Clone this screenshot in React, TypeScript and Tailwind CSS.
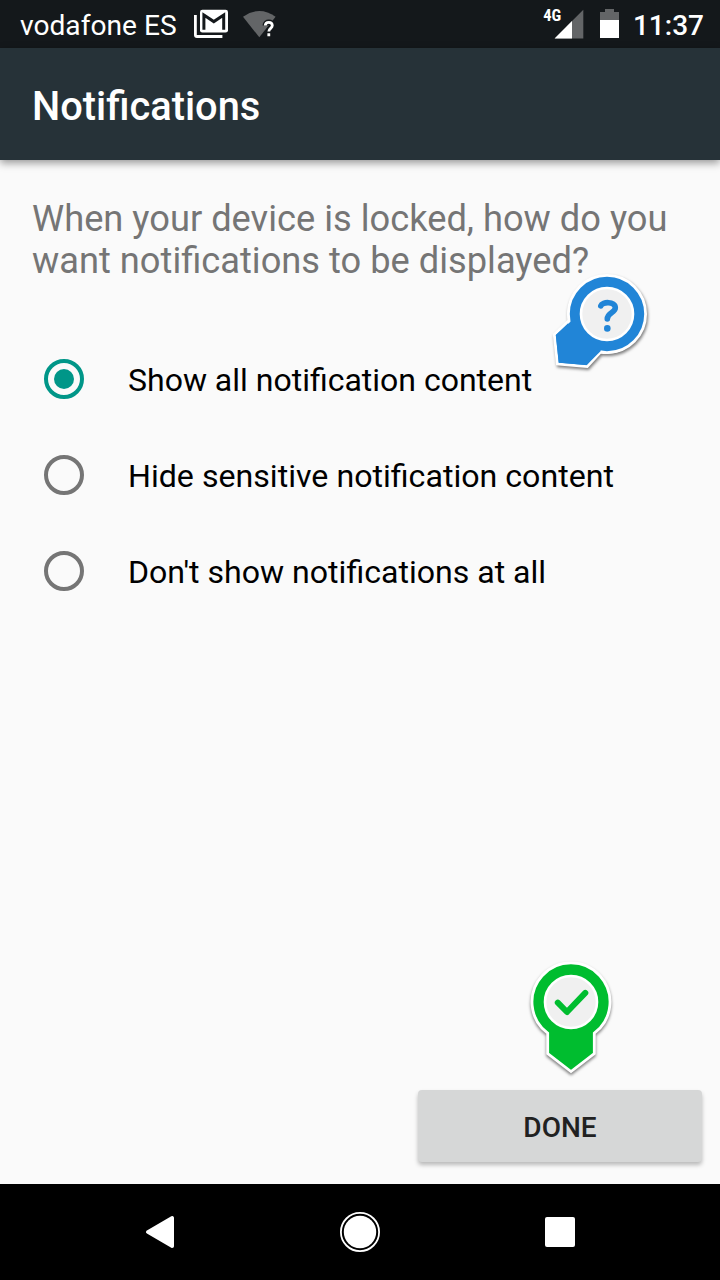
import { useState } from "react";

const OPTIONS = [
  { label: "Show all notification content", size: "text-[32px]" },
  { label: "Hide sensitive notification content", size: "text-[32.15px]" },
  { label: "Don't show notifications at all", size: "text-[32.08px]" },
];

function StatusBar() {
  return (
    <div className="flex h-12 shrink-0 items-center bg-[#14181b] pl-5 pr-4 text-[28px] leading-[33px] text-white">
      <span className="mt-[3px] w-[174px] shrink-0 whitespace-nowrap text-[28.15px]">vodafone ES</span>
      <svg className="h-12 w-[34px] shrink-0" viewBox="194 0 34 48" fill="none">
        <path d="M195.4 15v19.9q0 1.6 1.6 1.6h25.4" stroke="#fff" strokeWidth="2.8" />
        <rect x="200" y="9.8" width="28" height="22.8" rx="2.4" fill="#fff" />
        <path d="M203.9 29.8V15l9.9 6.6 9.9-6.6v14.8" stroke="#14181b" strokeWidth="3" />
      </svg>
      <svg className="ml-[15px] h-12 w-[34px] shrink-0" viewBox="243 0 34 48">
        <path d="M243 16.7Q259.3 5.3 275.6 16.7L259.3 37.3z" fill="#636567" />
        <path d="M265.3 25.6c0-4.4 7-4.4 7 0 0 2.8-3.5 2.9-3.5 6M268.8 33.4v2.8" fill="none" stroke="#14181b" strokeWidth="5.6" />
        <path d="M265.3 25.6c0-4.4 7-4.4 7 0 0 2.8-3.5 2.9-3.5 6M268.8 33.3v3" fill="none" stroke="#fff" strokeWidth="2.8" />
      </svg>
      <div className="flex-1" />
      <span className="mb-[15px] mr-[-7px] font-['Roboto_Condensed',Roboto,sans-serif] text-[16.5px] font-bold leading-none tracking-[-0.1px]">
        4G
      </span>
      <svg className="h-12 w-[30px] shrink-0" viewBox="554 0 30 48">
        <path d="M583.3 9.8v28.7H554.6z" fill="#636567" />
        <path d="M572 21.1v17.4H554.6z" fill="#fff" />
      </svg>
      <svg className="ml-4 h-12 w-[19px] shrink-0" viewBox="600 0 19 48">
        <path d="M600 12h5V9h9v3h5v8h-19z" fill="#636567" />
        <path d="M600 20h19v18h-19z" fill="#fff" />
      </svg>
      <span className="ml-[14px] mt-[3px] shrink-0 font-medium">11:37</span>
    </div>
  );
}

function HelpMarker() {
  return (
    <svg
      className="absolute left-[540px] top-[260px] h-[120px] w-[120px] drop-shadow-[1px_2px_1.5px_rgba(0,0,0,0.5)]"
      viewBox="0 0 120 120"
    >
      <path
        d="M29 60.5A37.6 37.6 0 1 1 60.5 92L47.2 106.6 17.4 104 14.3 74.5z"
        fill="#2185d7"
        stroke="#fff"
        strokeWidth="2.8"
      />
      <circle cx="67" cy="54" r="38.6" fill="#2185d7" stroke="#fff" strokeWidth="2.8" />
      <path d="M31 61.2 61 90.8 46.6 105.1 18.8 102.7 15.9 75z" fill="#2185d7" />
      <circle cx="67" cy="54" r="26" fill="#f0f0f0" stroke="#fff" strokeWidth="2.6" />
      <path
        d="M60.8 45.8C62.2 41.4 75.3 41.2 75.3 47.8 75.3 53 67.3 52.2 67.3 59"
        fill="none"
        stroke="#2185d7"
        strokeWidth="5.6"
        strokeLinecap="round"
      />
      <circle cx="67.3" cy="68.4" r="3.3" fill="#2185d7" />
    </svg>
  );
}

function CheckMarker() {
  return (
    <svg
      className="absolute left-[515px] top-[950px] h-[140px] w-[110px] drop-shadow-[0.5px_2px_1.5px_rgba(0,0,0,0.5)]"
      viewBox="0 0 110 140"
    >
      <path
        d="M32.7 83.2A39 39 0 1 1 79.3 83.2V103.5L56 121.5 32.7 103.5z"
        fill="#00bd2f"
        stroke="#fff"
        strokeWidth="2.8"
      />
      <circle cx="56" cy="52" r="26" fill="#f0f0f0" stroke="#fff" strokeWidth="2.6" />
      <path
        d="M42.8 52.7 52 62 70.3 42.9"
        fill="none"
        stroke="#00bd2f"
        strokeWidth="6"
        strokeLinecap="round"
        strokeLinejoin="round"
      />
    </svg>
  );
}

function NavigationBar() {
  return (
    <div className="flex h-24 shrink-0 items-center justify-center gap-[160px] bg-black">
      <button aria-label="Back" className="h-10 w-10">
        <svg className="h-10 w-10" viewBox="0 0 40 40">
          <path d="M7.8 20 32.2 5.8v28.4z" fill="#fff" stroke="#fff" strokeWidth="3.6" strokeLinejoin="round" />
        </svg>
      </button>
      <button aria-label="Home" className="h-10 w-10">
        <svg className="h-10 w-10" viewBox="0 0 40 40">
          <circle cx="20" cy="20" r="19.1" fill="none" stroke="#fff" strokeWidth="1.8" />
          <circle cx="20" cy="20" r="16.2" fill="#fff" />
        </svg>
      </button>
      <button aria-label="Recents" className="flex h-10 w-10 items-center justify-center">
        <span className="h-[30px] w-[30px] rounded-[2px] bg-white" />
      </button>
    </div>
  );
}

export default function App() {
  const [selected, setSelected] = useState(0);

  return (
    <div className="relative flex h-[1280px] w-[720px] flex-col overflow-hidden bg-[#fafafa] font-[Roboto,sans-serif]">
      <StatusBar />
      <header className="flex h-28 shrink-0 items-center bg-[#263238] px-8 shadow-[0_3px_8px_rgba(0,0,0,0.4)]">
        <h1 className="mt-1 text-[39.8px] font-medium leading-[47px] text-white">Notifications</h1>
      </header>
      <main className="flex flex-1 flex-col">
        <p className="mt-[38px] whitespace-nowrap px-8 text-[36.25px] leading-[42px] text-[#757575]">
          When your device is locked, how do you
          <br />
          want notifications to be displayed?
        </p>
        <div role="radiogroup" className="mt-[49px] flex flex-col">
          {OPTIONS.map(({ label, size }, i) => (
            <button
              key={label}
              role="radio"
              aria-checked={selected === i}
              onClick={() => setSelected(i)}
              className="flex h-24 items-center pl-11 text-left"
            >
              <span
                className={
                  "flex h-10 w-10 shrink-0 items-center justify-center rounded-full border-4 " +
                  (selected === i ? "border-[#009688]" : "border-[#757575]")
                }
              >
                {selected === i && <span className="h-5 w-5 rounded-full bg-[#009688]" />}
              </span>
              <span className={"ml-11 mt-[2px] whitespace-nowrap leading-[38px] text-black " + size}>{label}</span>
            </button>
          ))}
        </div>
        <div className="mb-[22px] mr-[18px] mt-auto flex justify-end">
          <button className="h-[72px] w-[284px] rounded-[4px] bg-[#d6d7d7] pt-[2px] text-[28px] font-medium leading-[33px] text-[#212121] shadow-[0_3px_4px_rgba(0,0,0,0.26)]">
            DONE
          </button>
        </div>
      </main>
      <NavigationBar />
      <HelpMarker />
      <CheckMarker />
    </div>
  );
}
